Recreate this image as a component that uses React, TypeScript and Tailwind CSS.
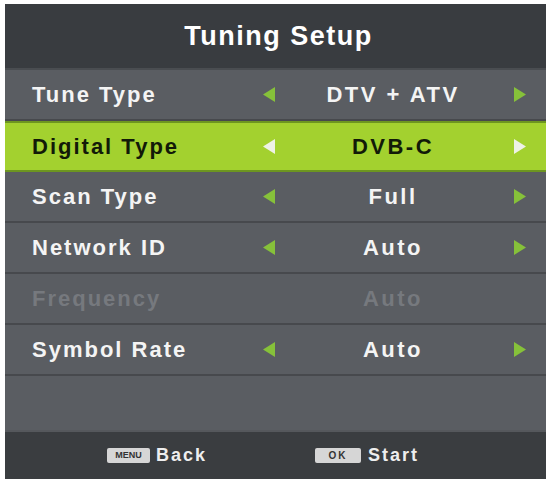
const rows = [
  { label: 'Tune Type', value: 'DTV + ATV', state: 'normal' },
  { label: 'Digital Type', value: 'DVB-C', state: 'active' },
  { label: 'Scan Type', value: 'Full', state: 'normal' },
  { label: 'Network ID', value: 'Auto', state: 'normal' },
  { label: 'Frequency', value: 'Auto', state: 'disabled' },
  { label: 'Symbol Rate', value: 'Auto', state: 'normal' },
];

function Arrow({ dir, color }: { dir: 'left' | 'right'; color: string }) {
  return (
    <svg width="14" height="17" viewBox="0 0 14 17">
      {dir === 'left' ? (
        <polygon points="13,1 13,16 1,8.5" fill={color} />
      ) : (
        <polygon points="1,1 1,16 13,8.5" fill={color} />
      )}
    </svg>
  );
}

export default function App() {
  return (
    <div className="w-[546px] h-[479px] bg-white pl-[5px] pt-[4px] font-['Liberation_Sans',Arial,sans-serif] font-bold">
      <div className="flex flex-col h-full bg-[#5a5d62]">
        {/* Header */}
        <div className="h-[66px] bg-[#393c40] flex items-center justify-center border-b-2 border-[#4a4d51]">
          <span className="text-[27px] text-white tracking-[1.5px] pl-[6px]">Tuning Setup</span>
        </div>

        {/* Rows */}
        {rows.map((r) => {
          const active = r.state === 'active';
          const disabled = r.state === 'disabled';
          const text = active ? 'text-[#121a08]' : disabled ? 'text-[#76797e]' : 'text-[#f4f4f4]';
          return (
            <div
              key={r.label}
              className={
                active
                  ? 'h-[51px] flex items-center pr-[9px] bg-[#a3d12f] border-y-2 border-y-[#6d9620]'
                  : 'h-[51px] flex items-center pr-[9px] border-b-2 border-[#47494d]'
              }
            >
              <div className={`w-[250px] pl-[27px] text-[22px] tracking-[2px] ${text}`}>{r.label}</div>
              <div className="w-[28px] flex justify-center">
                {!disabled && <Arrow dir="left" color={active ? '#eef2e6' : '#86c13a'} />}
              </div>
              <div className={`w-[220px] text-center text-[22px] tracking-[2.5px] ${text}`}>{r.value}</div>
              <div className="w-[34px] flex justify-center">
                {!disabled && <Arrow dir="right" color={active ? '#eef2e6' : '#86c13a'} />}
              </div>
            </div>
          );
        })}

        <div className="flex-1" />

        {/* Footer */}
        <div className="h-[49px] bg-[#3a3d40] flex items-center border-t-2 border-[#55585c]">
          <div className="flex items-center ml-[102px]">
            <span className="w-[43px] h-[15px] bg-[#d6d6d6] rounded-[2px] flex items-center justify-center text-[9px] text-[#333] leading-none">
              MENU
            </span>
            <span className="ml-[6px] text-[18px] text-[#eeeeee] tracking-[2px]">Back</span>
          </div>
          <div className="flex items-center ml-[108px]">
            <span className="w-[46px] h-[15px] bg-[#d6d6d6] rounded-[2px] flex items-center justify-center text-[10px] text-[#333] tracking-[2px] leading-none">
              OK
            </span>
            <span className="ml-[7px] text-[18px] text-[#eeeeee] tracking-[2px]">Start</span>
          </div>
        </div>
      </div>
    </div>
  );
}
